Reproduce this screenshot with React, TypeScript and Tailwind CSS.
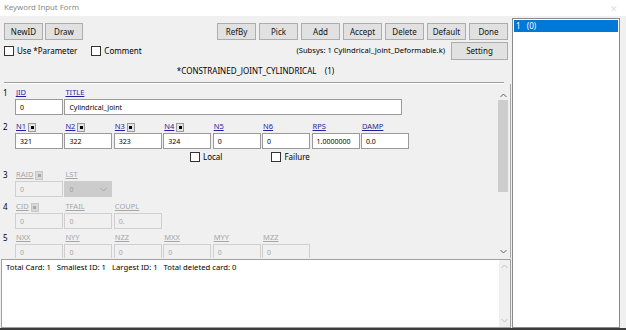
import React from "react";

const Btn = ({ label, w }: { label: string; w: string }) => (
  <div className={`${w} h-full border border-[#adadad] bg-[#e1e1e1] flex items-center justify-center text-[8px] text-[#111] leading-none`}>
    {label}
  </div>
);

const Check = ({ label }: { label: string }) => (
  <div className="flex items-center gap-[3px]">
    <div className="w-[10px] h-[10px] border border-[#333] bg-white" />
    <span className="text-[8px] leading-none text-black">{label}</span>
  </div>
);

const Dot = ({ disabled }: { disabled?: boolean }) => (
  <div
    className={`ml-[2px] w-[8px] h-[9px] flex items-center justify-center border ${
      disabled ? "border-[#c8c8c8] bg-[#d8d8d8]" : "border-[#9a9a9a] bg-[#e4e4e4]"
    }`}
  >
    <div className={`w-[3px] h-[3px] ${disabled ? "bg-[#a8a8a8]" : "bg-black"}`} />
  </div>
);

type Field = {
  label: string;
  value: string;
  dot?: boolean;
  w?: string;
  select?: boolean;
};

const Cell = ({ f, disabled }: { f: Field; disabled?: boolean }) => (
  <div className={`flex flex-col ${f.w ?? "w-[48px]"}`}>
    <div className="h-[10px] flex items-center pl-[1px]">
      <span
        className={`text-[7.5px] leading-none underline ${
          disabled ? "text-[#a6a6a6]" : "text-[#1f1fa0]"
        }`}
      >
        {f.label}
      </span>
      {f.dot && <Dot disabled={disabled} />}
    </div>
    {f.select ? (
      <div className="mt-[1px] h-[16px] bg-[#cccccc] border border-[#cccccc] flex items-center justify-between pl-[4px] pr-[4px]">
        <span className="text-[7px] leading-none text-[#9c9c9c]">{f.value}</span>
        <svg width="7" height="5" viewBox="0 0 7 5">
          <polyline points="0.5,1 3.5,4 6.5,1" fill="none" stroke="#a0a0a0" strokeWidth="0.9" />
        </svg>
      </div>
    ) : (
      <div
        className={`mt-[1px] h-[16px] border flex items-center pl-[4px] ${
          disabled ? "border-[#cfcfcf] bg-[#f0f0f0]" : "border-[#9a9a9a] bg-white"
        }`}
      >
        <span className={`text-[7px] leading-none ${disabled ? "text-[#a6a6a6]" : "text-black"}`}>
          {f.value}
        </span>
      </div>
    )}
  </div>
);

const Group = ({ num, fields, disabled, mt }: { num: string; fields: Field[]; disabled?: boolean; mt: string }) => (
  <div className={`flex shrink-0 ${mt}`}>
    <div className="w-[15px] pl-[3px] h-[10px] flex items-center text-[8px] leading-none text-black">{num}</div>
    <div className="flex gap-x-[1.43px]">
      {fields.map((f, i) => (
        <Cell key={i} f={f} disabled={disabled} />
      ))}
    </div>
  </div>
);

const Chevron = ({ up, color }: { up?: boolean; color: string }) => (
  <svg width="7" height="5" viewBox="0 0 7 5">
    <polyline
      points={up ? "0.5,4 3.5,1 6.5,4" : "0.5,1 3.5,4 6.5,1"}
      fill="none"
      stroke={color}
      strokeWidth="1"
    />
  </svg>
);

export default function App() {
  return (
    <div className="w-[626px] h-[330px] bg-[#f0f0f0] flex flex-col overflow-hidden font-['Noto_Sans',sans-serif]">
      {/* title bar */}
      <div className="h-[16px] bg-white flex items-center justify-between px-[4px] shrink-0">
        <span className="text-[7.8px] leading-none text-[#8a8a8a]">Keyword Input Form</span>
        <span className="text-[9px] leading-none text-[#e0e0e0] mr-[4px]">✕</span>
      </div>
      <div className="flex flex-1 min-h-0">
        {/* left column */}
        <div className="w-[511px] flex flex-col shrink-0">
          <div className="mt-[7px] h-[17px] flex pl-[4px] pr-[3px] shrink-0">
            <Btn label="NewID" w="w-[39px]" />
            <div className="ml-[2px] h-full flex">
              <Btn label="Draw" w="w-[38px]" />
            </div>
            <div className="flex-1" />
            <div className="flex gap-[3px] h-full">
              <Btn label="RefBy" w="w-[39px]" />
              <Btn label="Pick" w="w-[39px]" />
              <Btn label="Add" w="w-[39px]" />
              <Btn label="Accept" w="w-[39px]" />
              <Btn label="Delete" w="w-[39px]" />
              <Btn label="Default" w="w-[39px]" />
              <Btn label="Done" w="w-[39px]" />
            </div>
          </div>
          <div className="mt-[2px] h-[18px] flex items-center pl-[4px] pr-[3px] shrink-0">
            <Check label="Use *Parameter" />
            <div className="ml-[14px]">
              <Check label="Comment" />
            </div>
            <div className="flex-1" />
            <span className="text-[7.6px] leading-none text-black mr-[6px]">(Subsys: 1 Cylindrical_Joint_Deformable.k)</span>
            <div className="h-full flex">
              <Btn label="Setting" w="w-[57px]" />
            </div>
          </div>
          <div className="h-[22px] flex items-center justify-center shrink-0">
            <span className="text-[8px] leading-none text-black whitespace-pre">*CONSTRAINED_JOINT_CYLINDRICAL    (1)</span>
          </div>
          <div className="mx-[4px] w-[500px] h-[2px] border-t border-[#a0a0a0] border-b border-b-white shrink-0" />
          {/* scroll area */}
          <div className="h-[174px] flex border-r border-[#a8a8a8] overflow-hidden shrink-0">
            <div className="flex-1 flex flex-col overflow-hidden">
              <Group
                mt="mt-[4px]"
                num="1"
                fields={[
                  { label: "JID", value: "0" },
                  { label: "TITLE", value: "Cylindrical_Joint", w: "w-[338px]" },
                ]}
              />
              <Group
                mt="mt-[7px]"
                num="2"
                fields={[
                  { label: "N1", value: "321", dot: true },
                  { label: "N2", value: "322", dot: true },
                  { label: "N3", value: "323", dot: true },
                  { label: "N4", value: "324", dot: true },
                  { label: "N5", value: "0" },
                  { label: "N6", value: "0" },
                  { label: "RPS", value: "1.0000000" },
                  { label: "DAMP", value: "0.0" },
                ]}
              />
              <div className="mt-[2px] h-[11px] flex items-center shrink-0">
                <div className="ml-[190px]">
                  <Check label="Local" />
                </div>
                <div className="ml-[49px]">
                  <Check label="Failure" />
                </div>
              </div>
              <Group
                mt="mt-[8px]"
                num="3"
                disabled
                fields={[
                  { label: "RAID", value: "0", dot: true },
                  { label: "LST", value: "0", select: true },
                ]}
              />
              <Group
                mt="mt-[5px]"
                num="4"
                disabled
                fields={[
                  { label: "CID", value: "0", dot: true },
                  { label: "TFAIL", value: "0" },
                  { label: "COUPL", value: "0." },
                ]}
              />
              <Group
                mt="mt-[4px]"
                num="5"
                disabled
                fields={[
                  { label: "NXX", value: "0" },
                  { label: "NYY", value: "0" },
                  { label: "NZZ", value: "0" },
                  { label: "MXX", value: "0" },
                  { label: "MYY", value: "0" },
                  { label: "MZZ", value: "0" },
                ]}
              />
            </div>
            {/* scrollbar */}
            <div className="w-[10px] mr-[2px] flex flex-col items-center pt-[7px] pb-[2px]">
              <div className="h-[9px] flex items-center justify-center">
                <Chevron up color="#606060" />
              </div>
              <div className="w-[10px] h-[92px] bg-[#cdcdcd]" />
              <div className="flex-1" />
              <div className="h-[9px] flex items-center justify-center">
                <Chevron color="#606060" />
              </div>
            </div>
          </div>
          {/* text area */}
          <div className="mt-[1px] ml-[1px] w-[510px] h-[69px] border border-[#a0a0a0] bg-white flex shrink-0">
            <div className="flex-1 pl-[4px] pt-[4px] text-[7.7px] leading-none">
              <span className="text-[7.7px] leading-none text-black whitespace-pre">Total Card: 1   Smallest ID: 1   Largest ID: 1   Total deleted card: 0</span>
            </div>
            <div className="w-[11px] bg-[#f0f0f0] flex flex-col items-center justify-between py-[4px]">
              <Chevron up color="#c0c0c0" />
              <Chevron color="#c0c0c0" />
            </div>
          </div>
        </div>
        {/* right list */}
        <div className="ml-[1px] mt-[2px] w-[108px] h-[310px] border border-[#8a8a8a] bg-white p-[1px] shrink-0">
          <div className="h-[12px] bg-[#0078d7] flex items-center pl-[2px]">
            <span className="text-[8px] leading-none text-white whitespace-pre">1   (0)</span>
          </div>
        </div>
      </div>
      <div className="h-[2px] bg-[#3c3c3c] shrink-0" />
    </div>
  );
}
